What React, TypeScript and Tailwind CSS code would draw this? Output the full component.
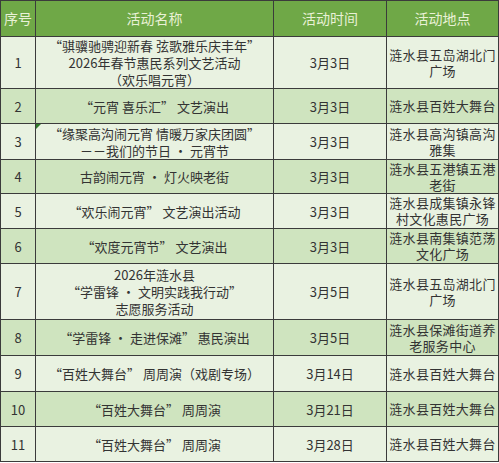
type Row = {
    no: string;
    name: string[];
    date: string;
    place: string[];
    h: string;
    dark: boolean;
    mark?: boolean;
};

const rows: Row[] = [
    {
        no: "1",
        name: ["“骐骥驰骋迎新春 弦歌雅乐庆丰年”", "2026年春节惠民系列文艺活动", "（欢乐唱元宵）"],
        date: "3月3日",
        place: ["涟水县五岛湖北门", "广场"],
        h: "h-[52px]",
        dark: false,
    },
    { no: "2", name: ["“元宵 喜乐汇” 文艺演出"], date: "3月3日", place: ["涟水县百姓大舞台"], h: "h-[35px]", dark: true },
    {
        no: "3",
        name: ["“缘聚高沟闹元宵 情暖万家庆团圆”", "－－我们的节日 · 元宵节"],
        date: "3月3日",
        place: ["涟水县高沟镇高沟", "雅集"],
        h: "h-[36px]",
        dark: false,
        mark: true,
    },
    { no: "4", name: ["古韵闹元宵 · 灯火映老街"], date: "3月3日", place: ["涟水县五港镇五港", "老街"], h: "h-[34px]", dark: true },
    { no: "5", name: ["“欢乐闹元宵” 文艺演出活动"], date: "3月3日", place: ["涟水县成集镇永锋", "村文化惠民广场"], h: "h-[35px]", dark: false },
    { no: "6", name: ["“欢度元宵节” 文艺演出"], date: "3月3日", place: ["涟水县南集镇范荡", "文化广场"], h: "h-[35px]", dark: true },
    {
        no: "7",
        name: ["2026年涟水县", "“学雷锋 · 文明实践我行动”", "志愿服务活动"],
        date: "3月5日",
        place: ["涟水县五岛湖北门", "广场"],
        h: "h-[56px]",
        dark: false,
    },
    { no: "8", name: ["“学雷锋 · 走进保滩” 惠民演出"], date: "3月5日", place: ["涟水县保滩街道养", "老服务中心"], h: "h-[36px]", dark: true },
    { no: "9", name: ["“百姓大舞台” 周周演（戏剧专场）"], date: "3月14日", place: ["涟水县百姓大舞台"], h: "h-[36px]", dark: false },
    { no: "10", name: ["“百姓大舞台” 周周演"], date: "3月21日", place: ["涟水县百姓大舞台"], h: "h-[35px]", dark: true },
    { no: "11", name: ["“百姓大舞台” 周周演"], date: "3月28日", place: ["涟水县百姓大舞台"], h: "h-[35px]", dark: false },
];

function Lines({ lines }: { lines: string[] }) {
    return (
        <>
            {lines.map((l, i) => (
                <div key={i} className="whitespace-nowrap">
                    {l}
                </div>
            ))}
        </>
    );
}

export default function App() {
    const cell = "border border-[#3b3b3b] p-0 text-center align-middle";

    return (
        <div className="bg-white" style={{ fontFamily: '"Noto Sans CJK SC", "Liberation Sans", sans-serif' }}>
            <table className="w-[498px] table-fixed border-collapse">
                <colgroup>
                    <col className="w-[35px]" />
                    <col className="w-[238px]" />
                    <col className="w-[113px]" />
                    <col className="w-[112px]" />
                </colgroup>
                <thead>
                    <tr className="h-[36px] bg-[#6fa847] text-[14px] text-[#e9f1d6]">
                        <th className={cell + " font-normal"}>序号</th>
                        <th className={cell + " font-normal"}>活动名称</th>
                        <th className={cell + " font-normal"}>活动时间</th>
                        <th className={cell + " font-normal"}>活动地点</th>
                    </tr>
                </thead>
                <tbody className="text-[13px] leading-[17px] text-[#333333]">
                    {rows.map((r) => (
                        <tr key={r.no} className={r.h + " " + (r.dark ? "bg-[#cfe4bf]" : "bg-[#e9f2e1]")}>
                            <td className={cell}>{r.no}</td>
                            <td className={cell + " relative"}>
                                {r.mark && (
                                    <span className="absolute left-0 top-0 h-0 w-0 border-l-[5px] border-b-[5px] border-l-[#2f7a2a] border-b-transparent" />
                                )}
                                <Lines lines={r.name} />
                            </td>
                            <td className={cell}>{r.date}</td>
                            <td className={cell + " px-[2px] leading-[16px] tracking-[0.3px]"}>
                                <Lines lines={r.place} />
                            </td>
                        </tr>
                    ))}
                </tbody>
            </table>
        </div>
    );
}
